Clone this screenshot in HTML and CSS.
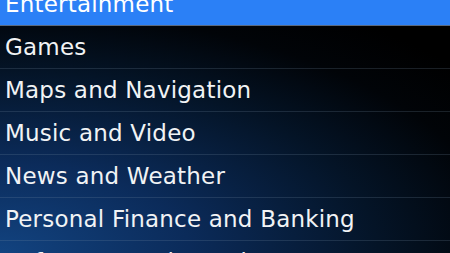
FILE: index.html
```html
<!DOCTYPE html>
<html>
<head>
<meta charset="utf-8">
<link rel="stylesheet" href="styles.css">
</head>
<body>
<div class="screen">
  <ul class="list">
    <li class="row selected">Entertainment</li>
    <li class="row">Games</li>
    <li class="row">Maps and Navigation</li>
    <li class="row">Music and Video</li>
    <li class="row">News and Weather</li>
    <li class="row">Personal Finance and Banking</li>
    <li class="row">Reference and eBooks</li>
  </ul>
</div>
</body>
</html>
```
FILE: styles.css
```css
html, body {
  margin: 0;
  padding: 0;
  width: 450px;
  height: 253px;
  overflow: hidden;
  background: #000;
}
.screen {
  width: 450px;
  height: 253px;
  overflow: hidden;
  background:
    radial-gradient(ellipse 140% 120% at 0% 100%, #124380 0%, #0b2b5a 30%, #041427 60%, #010408 80%, #000 95%);
}
.list {
  list-style: none;
  margin: -17px 0 0 0;
  padding: 0;
}
.row {
  height: 41px;
  padding: 0 0 1px 5px;
  display: flex;
  align-items: center;
  font-family: "DejaVu Sans", sans-serif;
  font-size: 23px;
  letter-spacing: 0.2px;
  color: #f1f3f5;
  border-bottom: 1px solid rgba(120, 140, 165, 0.22);
  white-space: nowrap;
}
.row.selected {
  background: #2b80f6;
  color: #ffffff;
  border-bottom: 1px solid #5a6a80;
}
```
